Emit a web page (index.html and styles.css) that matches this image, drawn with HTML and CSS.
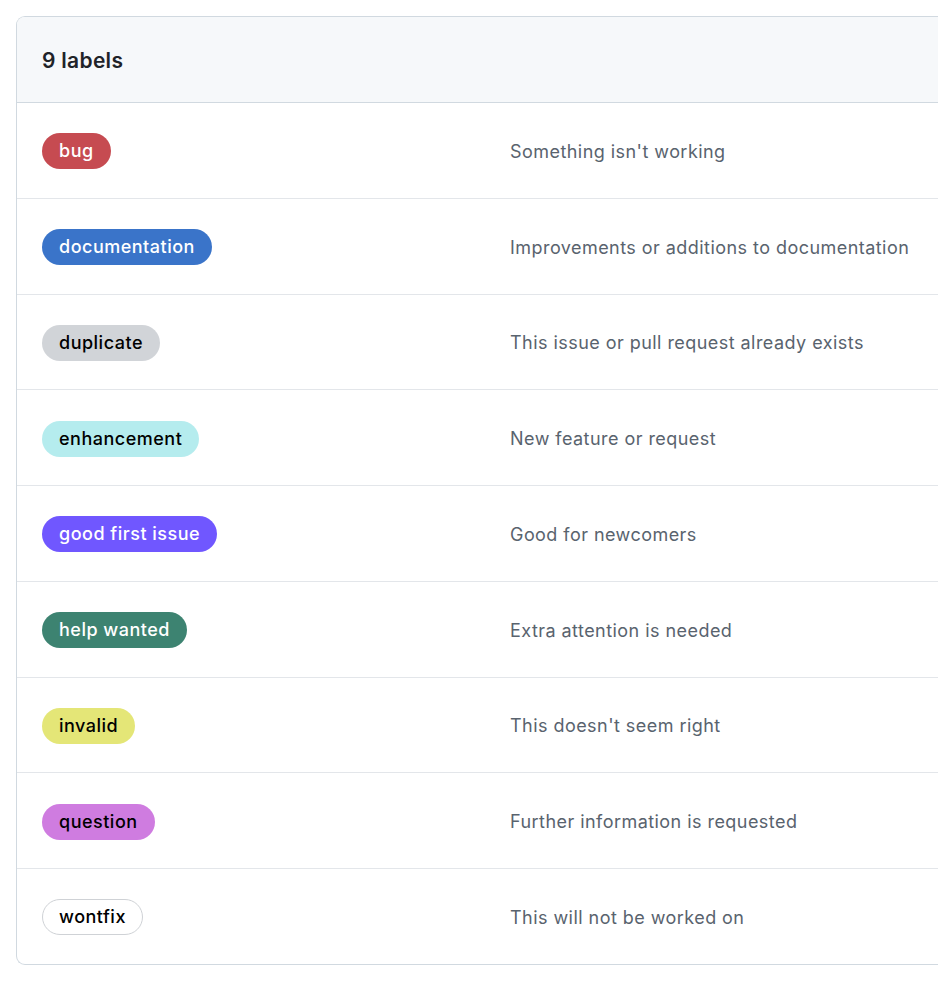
FILE: index.html
```html
<!DOCTYPE html>
<html lang="en">
<head>
<meta charset="utf-8">
<title>Labels</title>
<link rel="stylesheet" href="styles.css">
</head>
<body>
<div class="box">
  <div class="box-header"><h3 class="count">9 labels</h3></div>
  <div class="row"><div class="cell-label"><span class="label l-bug">bug</span></div><div class="desc">Something isn't working</div></div>
  <div class="row"><div class="cell-label"><span class="label l-doc">documentation</span></div><div class="desc">Improvements or additions to documentation</div></div>
  <div class="row"><div class="cell-label"><span class="label l-dup">duplicate</span></div><div class="desc">This issue or pull request already exists</div></div>
  <div class="row"><div class="cell-label"><span class="label l-enh">enhancement</span></div><div class="desc">New feature or request</div></div>
  <div class="row"><div class="cell-label"><span class="label l-gfi">good first issue</span></div><div class="desc">Good for newcomers</div></div>
  <div class="row"><div class="cell-label"><span class="label l-help">help wanted</span></div><div class="desc">Extra attention is needed</div></div>
  <div class="row"><div class="cell-label"><span class="label l-inv">invalid</span></div><div class="desc">This doesn't seem right</div></div>
  <div class="row"><div class="cell-label"><span class="label l-q">question</span></div><div class="desc">Further information is requested</div></div>
  <div class="row last"><div class="cell-label"><span class="label l-wont">wontfix</span></div><div class="desc">This will not be worked on</div></div>
</div>
</body>
</html>
```
FILE: styles.css
```css
html, body {
  margin: 0;
  padding: 0;
  background: #ffffff;
  overflow: hidden;
}
body {
  padding: 16px 0 0 16px;
  font-family: Inter, "Noto Sans", "Liberation Sans", sans-serif;
  -webkit-font-smoothing: antialiased;
}
.box {
  width: calc(100vw - 17px);
  border: 1px solid #d1d9e0;
  border-right: none;
  border-radius: 9px 0 0 9px;
  overflow: hidden;
  background: #fff;
}
.box-header {
  height: 84px;
  background: #f6f8fa;
  border-bottom: 1px solid #d1d9e0;
  display: flex;
  align-items: center;
  padding-left: 25px;
  padding-top: 1px;
}
.count {
  margin: 0;
  font-size: 21px;
  font-weight: 600;
  color: #1f2328;
  letter-spacing: 0.3px;
}
.row {
  height: 95.75px;
  box-sizing: border-box;
  border-bottom: 1px solid #e3e6ea;
  display: grid;
  grid-template-columns: 468px 1fr;
  align-items: center;
  padding-left: 25px;
  padding-top: 2px;
}
.row.last {
  border-bottom: none;
  height: 94.75px;
}
.label {
  display: inline-block;
  height: 36px;
  line-height: 36px;
  padding: 0 17px;
  border-radius: 18px;
  font-size: 18px;
  font-weight: 500;
  letter-spacing: 0.5px;
  box-sizing: border-box;
  white-space: nowrap;
}
.desc {
  font-size: 18px;
  color: #59636e;
  letter-spacing: 0.45px;
}
.l-bug { background: #c64b51; color: #fff; }
.l-doc { background: #3a74c9; color: #fff; }
.l-dup { background: #d1d4d8; color: #000; }
.l-enh { background: #b5ecee; color: #000; }
.l-gfi { background: #7057ff; color: #fff; }
.l-help { background: #3d8371; color: #fff; }
.l-inv { background: #e4e677; color: #000; }
.l-q { background: #cf7ce0; color: #000; }
.l-wont { background: #fff; color: #000; border: 1px solid #cfd2d6; line-height: 34px; padding: 0 16px; }
```
